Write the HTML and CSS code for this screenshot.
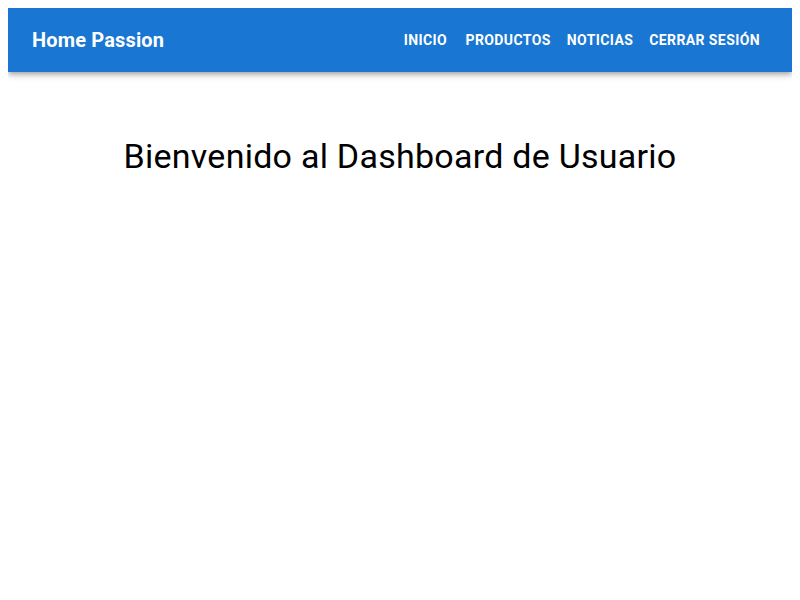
FILE: index.html
```html
<!DOCTYPE html>
<html lang="es">
<head>
<meta charset="utf-8">
<title>Home Passion</title>
<link rel="stylesheet" href="styles.css">
</head>
<body>
<header class="appbar">
  <div class="toolbar">
    <h6 class="brand">Home Passion</h6>
    <nav class="nav">
      <button class="btn">Inicio</button>
      <button class="btn">Productos</button>
      <button class="btn">Noticias</button>
      <button class="btn">Cerrar Sesión</button>
    </nav>
  </div>
</header>
<main class="content">
  <h4 class="title">Bienvenido al Dashboard de Usuario</h4>
</main>
</body>
</html>
```
FILE: styles.css
```css
body {
  margin: 8px;
  font-family: Roboto, "Helvetica", Arial, sans-serif;
  background: #fff;
}
.appbar {
  background: #1976d2;
  color: #fff;
  box-shadow: 0px 2px 4px -1px rgba(0,0,0,0.2), 0px 4px 5px 0px rgba(0,0,0,0.14), 0px 1px 10px 0px rgba(0,0,0,0.12);
}
.toolbar {
  display: flex;
  align-items: center;
  min-height: 64px;
  padding: 0 24px;
}
.brand {
  flex: 1;
  margin: 0;
  font-size: 20px;
  font-weight: 700;
  line-height: 1.6;
  letter-spacing: 0.0075em;
}
.nav {
  display: flex;
}
.btn {
  font-family: Roboto, "Helvetica", Arial, sans-serif;
  font-size: 14px;
  font-weight: 700;
  line-height: 1.75;
  letter-spacing: 0.02857em;
  text-transform: uppercase;
  min-width: 64px;
  padding: 6px 8px;
  border: 0;
  background: transparent;
  color: inherit;
  border-radius: 4px;
  cursor: pointer;
}
.content {
  padding-top: 64px;
}
.title {
  margin: 0;
  text-align: center;
  font-size: 34px;
  font-weight: 400;
  line-height: 1.235;
  letter-spacing: 0.00735em;
  color: #000;
}
```
